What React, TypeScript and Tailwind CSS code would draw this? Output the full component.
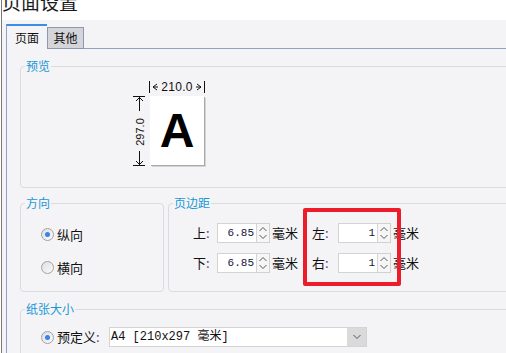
import React from "react";

const CJK = "font-['Noto_Sans_CJK_SC','Noto_Sans',sans-serif]";

function Group({
  title,
  className,
  children,
}: {
  title: string;
  className: string;
  children?: React.ReactNode;
}) {
  return (
    <div className={`relative border border-[#dcdce0] rounded-[4px] ${className}`}>
      <span
        className={`absolute -top-[8px] left-[4px] px-[1px] bg-[#f4f4f6] text-[#1a97d6] text-[12px] leading-[14px] ${CJK}`}
      >
        {title}
      </span>
      {children}
    </div>
  );
}

function Radio({ checked }: { checked?: boolean }) {
  return (
    <span className="w-[13px] h-[13px] shrink-0 rounded-full border border-[#a2a2a2] bg-gradient-to-br from-[#dedede] to-[#fbfbfb] flex items-center justify-center">
      {checked && <span className="w-[5px] h-[5px] rounded-full bg-[#3c80ee]" />}
    </span>
  );
}

function Spinner() {
  return (
    <div className="w-[13px] h-[20px] border border-l-0 border-[#d0d0d0] bg-[#f6f6f6]">
      <svg width="12" height="18" viewBox="0 0 12 18" className="block">
        <path d="M2.5 7 L6 3.5 L9.5 7" fill="none" stroke="#5a5a5a" strokeWidth="1" />
        <path d="M2.5 11 L6 14.5 L9.5 11" fill="none" stroke="#5a5a5a" strokeWidth="1" />
      </svg>
    </div>
  );
}

function Field({ label, value, lw }: { label: string; value: string; lw: string }) {
  return (
    <div className="flex items-center h-[20px]">
      <span className={`${lw} text-[13px] leading-[20px] text-[#111] ${CJK}`}>
        {label}
        <span className="text-[#6a3d8a]">:</span>
      </span>
      <div className="w-[40px] h-[20px] border border-[#d4d4d4] bg-white flex items-center justify-end pr-[2px]">
        <span className="font-['Liberation_Mono',monospace] text-[11px] leading-[12px] text-[#151540]">
          {value}
        </span>
      </div>
      <Spinner />
      <span className={`ml-[2px] text-[13px] leading-[20px] text-[#111] ${CJK}`}>毫米</span>
    </div>
  );
}

function HDim() {
  return (
    <div className="w-[56px] h-[12px] flex items-center justify-between">
      <svg width="11" height="12" viewBox="0 0 11 12" className="block">
        <line x1="0.5" y1="0" x2="0.5" y2="12" stroke="#111" />
        <path d="M8 3 L4 6 L8 9" fill="none" stroke="#111" />
        <line x1="4" y1="6" x2="9" y2="6" stroke="#111" />
      </svg>
      <span className="font-['Liberation_Sans',sans-serif] text-[12px] leading-[12px] text-[#111] tracking-[0.3px]">
        210.0
      </span>
      <svg width="11" height="12" viewBox="0 0 11 12" className="block">
        <line x1="10.5" y1="0" x2="10.5" y2="12" stroke="#111" />
        <path d="M3 3 L7 6 L3 9" fill="none" stroke="#111" />
        <line x1="2" y1="6" x2="7" y2="6" stroke="#111" />
      </svg>
    </div>
  );
}

function VDim() {
  return (
    <div className="relative w-[14px] h-[70px]">
      <svg width="14" height="70" viewBox="0 0 14 70" className="block">
        <line x1="2" y1="0.5" x2="14" y2="0.5" stroke="#111" />
        <line x1="2" y1="69.5" x2="14" y2="69.5" stroke="#111" />
        <line x1="8.5" y1="1" x2="8.5" y2="15" stroke="#111" />
        <path d="M5 5 L8.5 1.5 L12 5" fill="none" stroke="#111" />
        <line x1="8.5" y1="55" x2="8.5" y2="69" stroke="#111" />
        <path d="M5 65 L8.5 68.5 L12 65" fill="none" stroke="#111" />
      </svg>
      <span className="absolute left-[9px] top-[36px] -translate-x-1/2 -translate-y-1/2 -rotate-90 font-['Liberation_Sans',sans-serif] text-[11px] leading-[11px] text-[#111] whitespace-nowrap">
        297.0
      </span>
    </div>
  );
}

export default function App() {
  return (
    <div className="relative w-[506px] h-[353px] overflow-hidden bg-white flex">
      <div className="w-[1px] shrink-0 bg-white" />
      <div className="w-[1px] shrink-0 bg-[#7a7a7a]" />
      <div className="flex-1 flex flex-col min-w-0 min-h-0">
        <div className="h-[20px] shrink-0 bg-white overflow-hidden">
          <span className={`block -mt-[8px] text-[19px] leading-[19px] text-[#1a1a1a] ${CJK}`}>
            页面设置
          </span>
        </div>
        <div className="flex-1 min-h-0 overflow-hidden flex flex-col bg-[#f4f4f6]">
          <div className="h-[29px] shrink-0 pt-[4px] pl-[4px] flex items-end">
            <div
              className={`w-[41px] h-[25px] border-l border-[#8ea4c4] border-t-2 border-t-[#3a8ee6] flex items-center justify-center text-[12px] text-[#111] ${CJK}`}
            >
              页面
            </div>
            <div
              className={`w-[37px] h-[22px] border border-[#8b99b0] bg-[#d5d5d9] flex items-center justify-center text-[12px] text-[#111] ${CJK}`}
            >
              其他
            </div>
            <div className="flex-1 h-[1px] bg-[#8ea4c4] self-end" />
          </div>
          <div className="flex-1 shrink-0 ml-[4px] border-l border-[#8ea4c4] pl-[13px] pt-[17px] flex flex-col">
            <Group title="预览" className="h-[122px] w-[520px] shrink-0">
              <div className="pt-[14px] pl-[110px] flex flex-col">
                <div className="ml-[18px]">
                  <HDim />
                </div>
                <div className="mt-[3px] flex">
                  <VDim />
                  <div className="ml-[5px] w-[54px] h-[69px] bg-white shadow-[1px_1px_0_#a9a9a9,2px_2px_0_#d4d4d4] flex items-center justify-center">
                    <span className="font-['Liberation_Sans',sans-serif] font-bold text-[48px] leading-[48px] text-black">
                      A
                    </span>
                  </div>
                </div>
              </div>
            </Group>
            <div className="mt-[15px] flex gap-[4px] h-[89px] shrink-0">
              <Group title="方向" className="w-[144px] h-full shrink-0">
                <div className="pl-[20px] pt-[24px] flex flex-col gap-[20px]">
                  <div className="flex items-center gap-[3px] h-[13px]">
                    <Radio checked />
                    <span className={`text-[13px] leading-[13px] text-[#111] ${CJK}`}>纵向</span>
                  </div>
                  <div className="flex items-center gap-[3px] h-[13px]">
                    <Radio />
                    <span className={`text-[13px] leading-[13px] text-[#111] ${CJK}`}>横向</span>
                  </div>
                </div>
              </Group>
              <Group title="页边距" className="w-[400px] h-full shrink-0">
                <div className="pl-[24px] pt-[19px] flex gap-[14px]">
                  <div className="flex flex-col gap-[10px]">
                    <Field label="上" value="6.85" lw="w-[24px]" />
                    <Field label="下" value="6.85" lw="w-[24px]" />
                  </div>
                  <div className="flex flex-col gap-[10px]">
                    <Field label="左" value="1" lw="w-[26px]" />
                    <Field label="右" value="1" lw="w-[26px]" />
                  </div>
                </div>
              </Group>
            </div>
            <Group title="纸张大小" className="mt-[17px] h-[80px] w-[520px] shrink-0">
              <div className="pl-[20px] pt-[17px] flex items-center h-[37px]">
                <Radio checked />
                <span className={`ml-[3px] w-[52px] text-[13px] leading-[20px] text-[#111] ${CJK}`}>
                  预定义<span className="text-[#6a3d8a]">:</span>
                </span>
                <div className="w-[258px] h-[20px] border border-[#d4d4d4] bg-white flex items-center">
                  <span className="flex-1 pl-[1px] text-[12px] leading-[18px] text-[#111] whitespace-pre font-['Liberation_Mono','Noto_Sans_CJK_SC',monospace]">
                    A4 [210x297 毫米]
                  </span>
                  <div className="w-[19px] h-full bg-[#dadada] flex items-center justify-center">
                    <svg width="10" height="6" viewBox="0 0 10 6" className="block">
                      <path d="M1.5 1 L5 4.5 L8.5 1" fill="none" stroke="#555" />
                    </svg>
                  </div>
                </div>
              </div>
            </Group>
          </div>
        </div>
      </div>
      <div className="absolute left-[303px] top-[208px] w-[98px] h-[78px] border-4 border-[#ec1c2a] rounded-[2px]" />
    </div>
  );
}
